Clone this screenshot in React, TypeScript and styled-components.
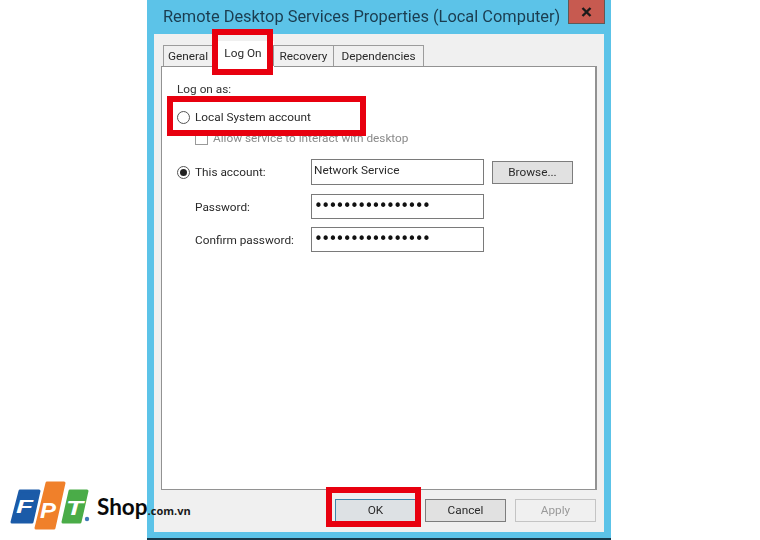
import React from "react";
import styled, { createGlobalStyle } from "styled-components";

const Global = createGlobalStyle`
  html, body { margin: 0; padding: 0; background: #fff; }
  body { font-family: Roboto, "Open Sans", sans-serif; color: #222; overflow: hidden; }
`;

const Page = styled.div`
  position: relative;
  width: 760px;
  height: 540px;
  overflow: hidden;
  background: #fff;
`;

const Win = styled.div`
  margin-left: 147px;
  width: 464px;
  height: 540px;
  box-sizing: border-box;
  background: #5cc3e8;
  border-bottom: 2px solid #17384a;
  display: flex;
  flex-direction: column;
  filter: blur(0.35px);
`;

const TitleBar = styled.div`
  height: 34px;
  flex: none;
  display: flex;
  align-items: flex-start;
  justify-content: space-between;
  padding: 0 6px 0 16px;
`;

const Title = styled.div`
  font-size: 16.4px;
  line-height: 33px;
  color: #1b3d50;
  white-space: nowrap;
`;

const Close = styled.div`
  width: 37px;
  height: 24px;
  flex: none;
  box-sizing: border-box;
  background: #c75a50;
  border: 1px solid #5d5a58;
  border-top: none;
  display: flex;
  align-items: center;
  justify-content: center;
`;

const Client = styled.div`
  flex: 1;
  margin: 0 7px 6px;
  background: #f0f0f0;
  padding: 11px 7px 0;
  display: flex;
  flex-direction: column;
`;

const Tabs = styled.div`
  display: flex;
  height: 21px;
  flex: none;
  padding-left: 3px;
  align-items: flex-end;
  position: relative;
  z-index: 1;
`;

const Tab = styled.div<{ $w: number; $active?: boolean }>`
  width: ${(p) => p.$w}px;
  height: ${(p) => (p.$active ? 27 : 21)}px;
  box-sizing: border-box;
  background: ${(p) => (p.$active ? "#fff" : "#f0f0f0")};
  border: ${(p) => (p.$active ? "none" : "1px solid #9c9c9c")};
  border-bottom: none;
  margin-left: -1px;
  font-size: 11.8px;
  line-height: ${(p) => (p.$active ? 24 : 20)}px;
  text-align: center;
  color: #2a2a2a;
  align-self: flex-start;
  margin-top: ${(p) => (p.$active ? -4 : 0)}px;
`;

const Panel = styled.div`
  height: 424px;
  flex: none;
  box-sizing: border-box;
  background: #fff;
  border: 1px solid #929292;
  border-right-width: 2px;
  padding: 14px 15px 0;
`;

const Heading = styled.div`
  font-size: 11.8px;
  line-height: 16px;
  color: #333;
`;

const OptionRow = styled.div`
  display: flex;
  align-items: center;
  gap: 5px;
  height: 16px;
  margin-top: 12px;
`;

const Radio = styled.span<{ $checked?: boolean }>`
  width: 13px;
  height: 13px;
  flex: none;
  box-sizing: border-box;
  border: 1px solid #555;
  border-radius: 50%;
  background: #fff;
  display: flex;
  align-items: center;
  justify-content: center;
  &::after {
    content: "";
    display: ${(p) => (p.$checked ? "block" : "none")};
    width: 7px;
    height: 7px;
    border-radius: 50%;
    background: #222;
  }
`;

const Label = styled.span<{ $muted?: boolean }>`
  font-size: 11.8px;
  line-height: 16px;
  color: ${(p) => (p.$muted ? "#8a8a8a" : "#2a2a2a")};
  white-space: nowrap;
`;

const CheckRow = styled.div`
  display: flex;
  align-items: center;
  gap: 5px;
  height: 14px;
  margin-top: 6px;
  padding-left: 18px;
`;

const CheckBox = styled.span`
  width: 13px;
  height: 13px;
  box-sizing: border-box;
  border: 1px solid #9a9a9a;
  background: #fff;
  flex: none;
`;

const FieldRow = styled.div<{ $top: number }>`
  display: grid;
  grid-template-columns: 134px 173px auto;
  align-items: center;
  margin-top: ${(p) => p.$top}px;
`;

const FieldLabel = styled.div<{ $indent?: boolean }>`
  display: flex;
  align-items: center;
  gap: 5px;
  padding-left: ${(p) => (p.$indent ? 18 : 0)}px;
`;

const Input = styled.div<{ $h: number }>`
  height: ${(p) => p.$h}px;
  box-sizing: border-box;
  background: #fff;
  border: 1px solid #7a7a7a;
  padding: 0 2px;
  font-size: 11.8px;
  line-height: 21px;
  color: #2a2a2a;
  white-space: nowrap;
  overflow: hidden;
`;

const Dots = styled.span`
  font-family: "DejaVu Sans", sans-serif;
  font-size: 15px;
  letter-spacing: -1.65px;
  line-height: 23px;
  color: #111;
  display: block;
`;

const Btn = styled.div<{ $disabled?: boolean; $default?: boolean }>`
  width: 81px;
  height: 23px;
  box-sizing: border-box;
  background: ${(p) => (p.$disabled ? "#f0f0f0" : p.$default ? "#dde1e4" : "#e1e1e1")};
  border: 1px solid ${(p) => (p.$disabled ? "#c4c4c4" : p.$default ? "#3f86ab" : "#7d7d7d")};
  color: ${(p) => (p.$disabled ? "#9a9a9a" : "#2a2a2a")};
  font-size: 11.8px;
  line-height: 21px;
  text-align: center;
  flex: none;
`;

const BrowseBtn = styled(Btn)`
  margin-left: 8px;
`;

const Footer = styled.div`
  display: flex;
  justify-content: flex-end;
  gap: 9px;
  padding-top: 9px;
  padding-right: 1px;
`;

const Mark = styled.div<{ $x: number; $y: number; $w: number; $h: number }>`
  position: absolute;
  left: ${(p) => p.$x}px;
  top: ${(p) => p.$y}px;
  width: ${(p) => p.$w}px;
  height: ${(p) => p.$h}px;
  box-sizing: border-box;
  border: 6px solid #e8000f;
  filter: blur(0.3px);
`;

const Logo = styled.div`
  position: absolute;
  left: 8px;
  top: 480px;
  display: flex;
  align-items: flex-start;
  white-space: nowrap;
`;

const LogoMark = styled.svg`
  display: block;
  flex: none;
`;

const Wordmark = styled.div`
  display: flex;
  align-items: baseline;
  margin: 14px 0 0 5px;
`;

const Shop = styled.span`
  font-family: Lato, "Open Sans", sans-serif;
  font-weight: 700;
  font-size: 22.5px;
  line-height: 26px;
  color: #0a0a0a;
`;

const Domain = styled.span`
  font-family: "Open Sans", "Liberation Sans", sans-serif;
  font-weight: 700;
  font-size: 11px;
  color: #1a1a1a;
`;

const LogoLetter = styled.text<{ $size: number }>`
  font-family: "Liberation Sans", sans-serif;
  font-weight: 700;
  font-style: italic;
  font-size: ${(p) => p.$size}px;
  fill: #fff;
`;

export default function App() {
  return (
    <Page>
      <Global />
      <Win>
        <TitleBar>
          <Title>Remote Desktop Services Properties (Local Computer)</Title>
          <Close>
            <svg width="11" height="10" viewBox="0 0 11 10">
              <path d="M1.5 1 L9.5 9 M9.5 1 L1.5 9" stroke="#1b1b1b" strokeWidth="2.4" fill="none" />
            </svg>
          </Close>
        </TitleBar>
        <Client>
          <Tabs>
            <Tab $w={50}>General</Tab>
            <Tab $w={62} $active>Log On</Tab>
            <Tab $w={61}>Recovery</Tab>
            <Tab $w={91}>Dependencies</Tab>
          </Tabs>
          <Panel>
            <Heading>Log on as:</Heading>
            <OptionRow>
              <Radio />
              <Label>Local System account</Label>
            </OptionRow>
            <CheckRow>
              <CheckBox />
              <Label $muted>Allow service to interact with desktop</Label>
            </CheckRow>
            <FieldRow $top={14}>
              <FieldLabel>
                <Radio $checked />
                <Label>This account:</Label>
              </FieldLabel>
              <Input $h={26}>Network Service</Input>
              <BrowseBtn>Browse...</BrowseBtn>
            </FieldRow>
            <FieldRow $top={9}>
              <FieldLabel $indent>
                <Label>Password:</Label>
              </FieldLabel>
              <Input $h={25}><Dots>••••••••••••••••</Dots></Input>
            </FieldRow>
            <FieldRow $top={8}>
              <FieldLabel $indent>
                <Label>Confirm password:</Label>
              </FieldLabel>
              <Input $h={25}><Dots>••••••••••••••••</Dots></Input>
            </FieldRow>
          </Panel>
          <Footer>
            <Btn $default>OK</Btn>
            <Btn>Cancel</Btn>
            <Btn $disabled>Apply</Btn>
          </Footer>
        </Client>
      </Win>

      <Mark $x={212} $y={29} $w={61} $h={46} />
      <Mark $x={167} $y={96} $w={199} $h={40} />
      <Mark $x={326} $y={487} $w={95} $h={40} />

      <Logo>
        <LogoMark width="84" height="52" viewBox="0 0 84 52">
          <path d="M12 11 H31 L24 42 H4 Z" fill="#1b5ba8" stroke="#1b5ba8" strokeWidth="3" strokeLinejoin="round" />
          <path d="M62 11 H79 L72 42 H55 Z" fill="#4aac48" stroke="#4aac48" strokeWidth="3" strokeLinejoin="round" />
          <path d="M39 3 H56 L46 48 H28 Z" fill="#f0802a" stroke="#f0802a" strokeWidth="3" strokeLinejoin="round" />
          <LogoLetter $size={19} x="8" y="33" textLength={17} lengthAdjust="spacingAndGlyphs">F</LogoLetter>
          <LogoLetter $size={22} x="32" y="38" textLength={16} lengthAdjust="spacingAndGlyphs">P</LogoLetter>
          <LogoLetter $size={20} x="58" y="35" textLength={17} lengthAdjust="spacingAndGlyphs">T</LogoLetter>
          <circle cx="79" cy="39" r="2.2" fill="#3f78b8" />
        </LogoMark>
        <Wordmark>
          <Shop>Shop</Shop>
          <Domain>.com.vn</Domain>
        </Wordmark>
      </Logo>
    </Page>
  );
}
